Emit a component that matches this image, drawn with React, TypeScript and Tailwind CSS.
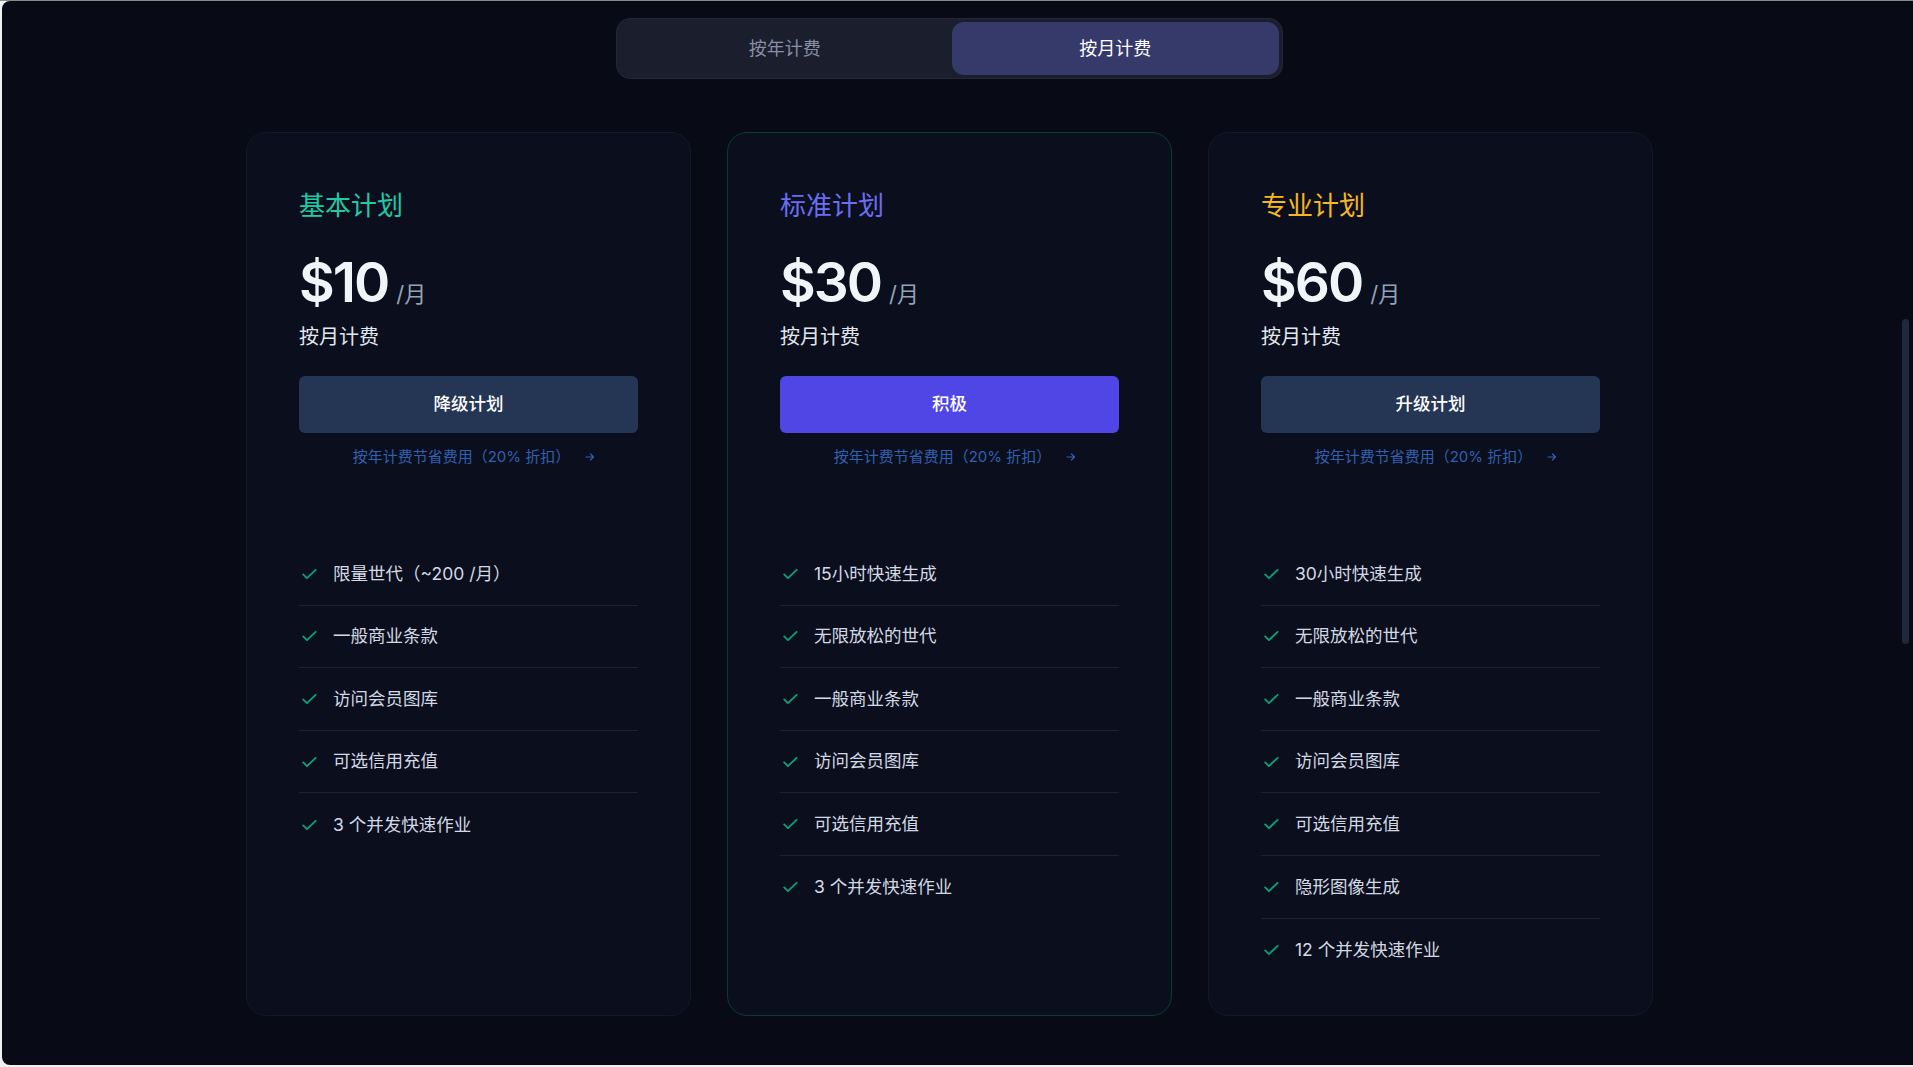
import React from "react";

type Plan = {
  name: string;
  nameColor: string;
  price: string;
  button: string;
  primary: boolean;
  highlight: boolean;
  features: string[];
};

const plans: Plan[] = [
  {
    name: "基本计划",
    nameColor: "text-[#21c9a5]",
    price: "$10",
    button: "降级计划",
    primary: false,
    highlight: false,
    features: ["限量世代（~200 /月）", "一般商业条款", "访问会员图库", "可选信用充值", "3 个并发快速作业"],
  },
  {
    name: "标准计划",
    nameColor: "text-[#6a6ef2]",
    price: "$30",
    button: "积极",
    primary: true,
    highlight: true,
    features: ["15小时快速生成", "无限放松的世代", "一般商业条款", "访问会员图库", "可选信用充值", "3 个并发快速作业"],
  },
  {
    name: "专业计划",
    nameColor: "text-[#f6b722]",
    price: "$60",
    button: "升级计划",
    primary: false,
    highlight: false,
    features: ["30小时快速生成", "无限放松的世代", "一般商业条款", "访问会员图库", "可选信用充值", "隐形图像生成", "12 个并发快速作业"],
  },
];

const font = "font-['Inter','Noto_Sans_CJK_SC',sans-serif]";

function Check() {
  return (
    <svg width="20" height="20" viewBox="0 0 24 24" fill="none" className="shrink-0">
      <path d="M5 12.5l4.5 4.5L20 7" stroke="#0f9f74" strokeWidth="2.2" strokeLinecap="round" strokeLinejoin="round" />
    </svg>
  );
}

function Arrow() {
  return (
    <svg width="12" height="12" viewBox="0 0 24 24" fill="none" className="inline-block">
      <path d="M4 12h15M13 6l6 6-6 6" stroke="#3060b0" strokeWidth="2.4" strokeLinecap="round" strokeLinejoin="round" />
    </svg>
  );
}

function Card({ plan }: { plan: Plan }) {
  return (
    <div
      className={`w-[445px] rounded-[20px] border px-[52px] pt-[57px] pb-[34px] bg-[#0b0f1d] ${
        plan.highlight ? "border-[#0c3a31]" : "border-[#121828]"
      }`}
    >
      <div className={`text-[26px] leading-[32px] ${plan.nameColor}`}>{plan.name}</div>
      <div className="mt-[33px] flex items-baseline">
        <span className="text-[55px] leading-none font-semibold text-[#f1f5f9] tracking-[-2px]">{plan.price}</span>
        <span className="ml-[8px] text-[22px] leading-none text-[#94a3b8]">/月</span>
      </div>
      <div className="mt-[13px] text-[20px] leading-[28px] text-[#e2e8f0]">按月计费</div>
      <button
        className={`mt-[25px] h-[57px] w-full rounded-[6px] text-[17.5px] font-medium text-white ${
          plan.primary ? "bg-[#4f46e5]" : "bg-[#253655]"
        }`}
      >
        {plan.button}
      </button>
      <div className="mt-[14px] flex h-[20px] items-center justify-center gap-[14px] pl-[12px] text-[15px] leading-[20px] text-[#3060b0]">
        <span>按年计费节省费用（20% 折扣）</span>
        <Arrow />
      </div>
      <ul className="mt-[76px]">
        {plan.features.map((f, i) => (
          <li
            key={i}
            className={`flex h-[62.6px] items-center ${
              i < plan.features.length - 1 ? "border-b border-[#1a2334]" : ""
            }`}
          >
            <Check />
            <span className="ml-[14px] text-[17.5px] text-[#d3d9e4]">{f}</span>
          </li>
        ))}
      </ul>
    </div>
  );
}

export default function App() {
  return (
    <div className={`h-[1067px] w-full overflow-hidden border-t border-[#8a8a8a] bg-[#f0f0f0] pl-[2px] pb-[2px] ${font}`}>
      <div className="relative flex h-full rounded-tl-[8px] rounded-bl-[8px] bg-[#080b16]">
        <div className="flex-1">
          <div className="mx-auto mt-[17px] grid h-[61px] w-[667px] grid-cols-2 rounded-[14px] border border-[#232738] bg-[#1b1e2d] p-[3px]">
            <button className="rounded-[12px] text-[18px] text-[#8890a6]">按年计费</button>
            <button className="ml-[2px] rounded-[12px] bg-[#363a6a] text-[18px] text-white">按月计费</button>
          </div>
          <div className="mt-[53px] flex justify-center gap-[36px]">
            {plans.map((p) => (
              <Card key={p.name} plan={p} />
            ))}
          </div>
        </div>
        <div className="relative w-[16px]">
          <div className="absolute left-[5px] top-[318px] h-[325px] w-[7px] rounded-full bg-[#1e293b]" />
        </div>
      </div>
    </div>
  );
}
